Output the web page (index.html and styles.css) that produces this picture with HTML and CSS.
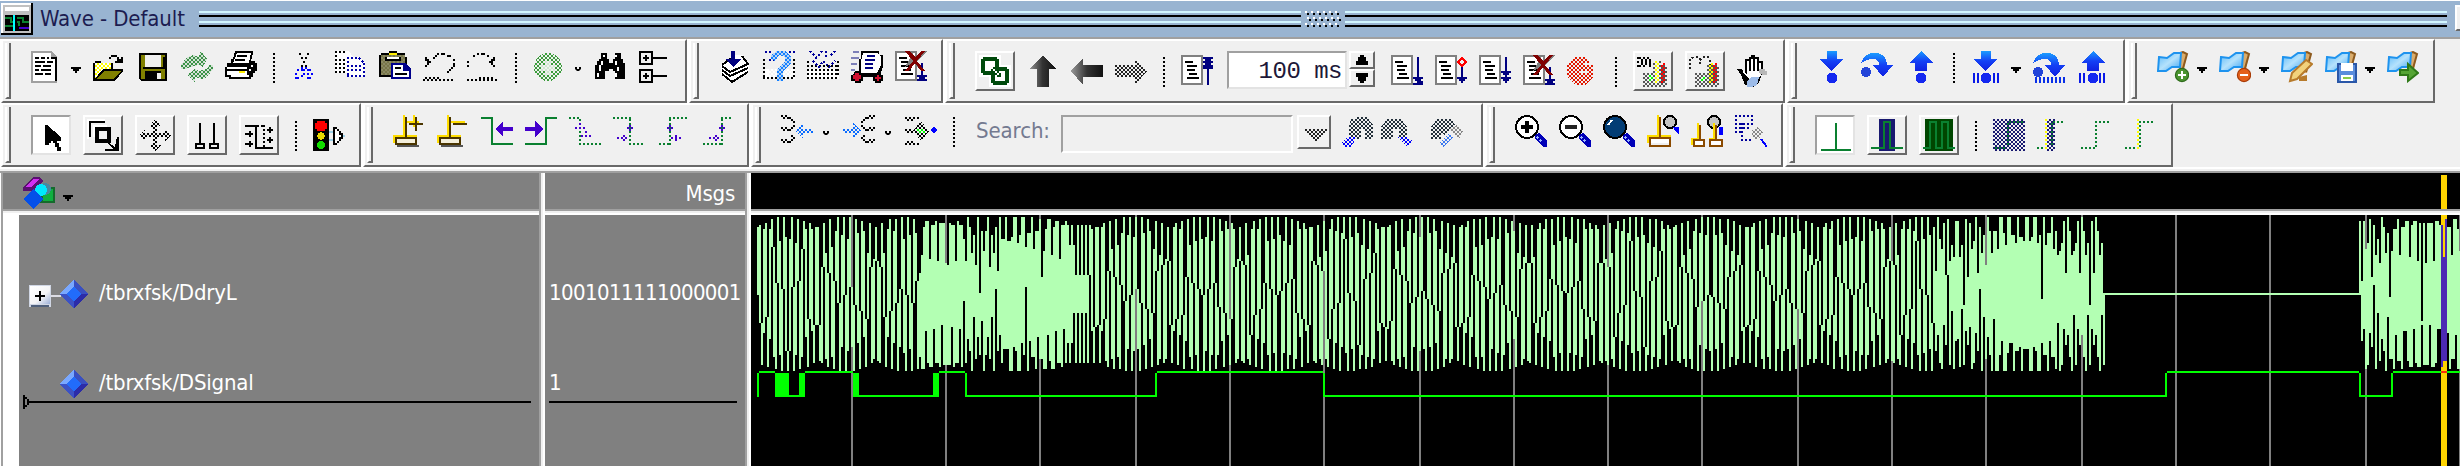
FILE: index.html
```html
<!DOCTYPE html>
<html lang="en">
<head>
<meta charset="utf-8">
<title>Wave - Default</title>
<link rel="stylesheet" href="styles.css">
</head>
<body>
<svg class="defs" aria-hidden="true">
  <defs>
    <pattern id="ck" width="2" height="2" patternUnits="userSpaceOnUse"><path d="M0 0h1v1H0zM1 1h1v1H1z" fill="#f0f0f0"/></pattern>
    <pattern id="ckb" width="2" height="2" patternUnits="userSpaceOnUse"><path d="M0 0h1v1H0zM1 1h1v1H1z" fill="#222"/></pattern>
    <pattern id="cky" width="2" height="2" patternUnits="userSpaceOnUse"><path d="M0 0h2v2H0z" fill="#fff"/><path d="M0 0h1v1H0zM1 1h1v1H1z" fill="#ff0"/></pattern>
    <pattern id="ckn" width="2" height="2" patternUnits="userSpaceOnUse"><path d="M0 0h1v1H0zM1 1h1v1H1z" fill="#191970"/></pattern>
    <linearGradient id="steel" x1="0" x2="1" y1="0" y2="0"><stop offset="0" stop-color="#999"/><stop offset=".5" stop-color="#333"/><stop offset="1" stop-color="#111"/></linearGradient>
    <linearGradient id="blue" x1="0" x2="0" y1="0" y2="1"><stop offset="0" stop-color="#1a9cff"/><stop offset=".5" stop-color="#1440f5"/><stop offset="1" stop-color="#1020e0"/></linearGradient>
    <linearGradient id="flagc" x1="0" x2="1" y1="0" y2="1"><stop offset="0" stop-color="#5ab8f8"/><stop offset=".5" stop-color="#b5e2fc"/><stop offset="1" stop-color="#3aa2f2"/></linearGradient>
    <linearGradient id="boxg" x1="0" x2="1" y1="0" y2="1"><stop offset="0" stop-color="#fff"/><stop offset=".6" stop-color="#f4f4f6"/><stop offset="1" stop-color="#9db0d8"/></linearGradient>
  </defs>
  <symbol id="doc" viewBox="0 0 16 16"><path d="M0 0h10l3 3v13H0z" fill="#a0a0a0"/><path d="M1 1h9v3h2v11H1z" fill="#fff"/><path d="M10 3h3v12h-1V4h-2zM2 3h2v1H2zM5 3h2v1H5zM8 3h1v1H8zM2 5h5v1H2zM8 5h3v1H8zM2 7h3v1H2zM6 7h4v1H6zM2 9h2v1H2zM5 9h5v1H5zM2 11h4v1H2zM7 11h3v1H7z"/></symbol>
  <symbol id="open" viewBox="0 0 16 16"><path d="M0 6h1V5h3v1h6v4H5L1 15H0z"/><path d="M1 6h8v3H5l-4 5z" fill="url(#cky)"/><path d="M5 9h10v1l-4 5H0z"/><path d="M5.500 10H14l-4 4H1.500z" fill="#808000"/><path d="M8 3h1v1H8zM9 2h3v1H9zM12 3h1v1h1V3h1v3h-4V5h1z"/></symbol>
  <symbol id="save" viewBox="0 0 16 16"><path d="M1 1h14v14H2l-1-1z"/><path d="M2 2h1v7h11V3h-1v5H3V2h11v12h-3v-4H4v4H2z" fill="#808000"/><path d="M4 2h8v6H4z" fill="#f0f0f0"/><path d="M4 10h8v4H4z"/><path d="M10 11h2v3h-2z" fill="#f0f0f0"/></symbol>
  <symbol id="reload" viewBox="0 0 16 16"><path d="M0 9V7l3-4 3-1 3 1 1-3 3 4-2 4-2-1-4 1-3 1zM16 7v2l-3 4-3 1-3-1v3l-4-4 4-3 2 1 4-1 1-2z" fill="#3b9247"/><path d="M0 0h16v16H0z" fill="url(#ck)" opacity=".85"/></symbol>
  <symbol id="print" viewBox="0 0 16 16"><path d="M5 0h9v1l-1 4h2v1h1v4h-1v1h-1v2h-1v1H2v-1H0V8h1V6h2V4h1z"/><path d="M6 1h7l-1 5H4z" fill="#fff"/><path d="M6 2h5v1H6zM5 4h5v1H5zM5 6h7v1H5z"/><path d="M1 8h10v1H1zM1 10h10v2H1zM3 12h9v1H3z" fill="#fff"/><path d="M7 10h3v1H7z" fill="#fe0"/><path d="M13 7h1v1h-1zM12 9h1v1h-1z" fill="#fff"/></symbol>
  <symbol id="cut" viewBox="0 0 16 16"><path d="M4 1h1v1H4zM8 1h1v1H8zM5 3h1v1H5zM7 3h1v1H7zM6 5h1v1H6zM5 7h1v1H5zM7 7h1v1H7z"/><path d="M5 8h1v1H5zM7 8h1v1H7zM3 9h1v1H3zM5 9h2v1H5zM8 9h2v1H8zM2 11h1v1H2zM6 11h1v1H6zM8 11h1v1H8zM10 11h1v1h-1zM2 13h2v1H2zM5 12h1v1H5zM8 13h2v1H8z" fill="#00f"/></symbol>
  <symbol id="copy" viewBox="0 0 16 16"><path d="M0 0h7l2 3v8H0z" fill="#fff"/><path d="M.500 0v11M0 .500h6M8.500 4v7M2 4.500h6M2 6.500h6M2 8.500h5M0 10.500h6" stroke="#000" fill="none" stroke-dasharray="1 1"/><path d="M6 3h6l3 3v7H6z" fill="#fff"/><path d="M6.500 3v10M6 3.500h6M14.500 6v8M8 7.500h6M8 9.500h6M6 12.500h9M12 3.500l3 3" stroke="#00a" fill="none" stroke-dasharray="1 1"/></symbol>
  <symbol id="paste" viewBox="0 0 16 16"><path d="M1 1h12v2h1v10H0V2h1z"/><path d="M1 2h12v10H1z" fill="#777548"/><path d="M1 2h12v10H1z" fill="url(#ck)" opacity=".16"/><path d="M3 3h8v2H3zM5 0h4v2H5z"/><path d="M4 3h6v1H4z" fill="#fff"/><path d="M5 1h4v1H5z" fill="#fe0"/><path d="M6 6h7l3 3v5H6z" fill="#00008b"/><path d="M7 7h5v3h3v3H7z" fill="#fff"/><path d="M8 8h3v1H8zM8 11h6v1H8z"/></symbol>
  <symbol id="undo" viewBox="0 0 16 16"><path d="M1 3h1v1h1v1h1v1H3v1H2v1H1V7h1V5H1zM7 1h1v1H7zM9 1h2v1H9zM12 2h2v1h-2zM5 3h1V2h1v1H6v1H5zM15 4h1v1h-1zM15 6h1v2h-1zM14 8h1v1h-1zM13 9h1v1h-1zM12 10h1v1h-1z"/><path d="M0 14.500h16M1 13.500h7" stroke="#000" stroke-dasharray="1 1"/></symbol>
  <symbol id="redo" viewBox="0 0 16 16"><path d="M14 3h-1v1h-1v1h-1v1h1v1h1v1h1V7h-1V5h1zM6 1H5v1h1zM9 1H7v1h2zM4 2H3v1h1zM10 2h1v1h-1zM1 5H0v1h1zM1 7H0v1h1z"/><path d="M0 14.500h15M6 13.500h7" stroke="#000" stroke-dasharray="1 1"/></symbol>
  <symbol id="plusball" viewBox="0 0 16 16"><circle cx="7.500" cy="8" r="7" fill="#3c9c3c"/><path d="M6 5h3v2h2v3H9v2H6v-2H4V7h2z" fill="#cfe6cf"/><path d="M0 0h16v16H0z" fill="url(#ck)"/></symbol>
  <symbol id="find" viewBox="0 0 16 16"><path d="M3 1h3v3h1v2h2V4h1V1h3v3h1v2h1v8h-5v-4H9v-1H7v1H5v4H0V7h1V5h1V4h1z"/><path d="M4 2h1v1H4zM10 2h1v1h-1zM3 5h1v2H3zM2 7h1v3H2zM1 11h1v2H1zM10 5h1v2h-1zM11 8h1v2h-1zM10 11h1v2h-1z" fill="#fff"/></symbol>
  <symbol id="tree" viewBox="0 0 16 16"><path d="M.500 .500h6v6h-6zM.500 9.500h6v6h-6zM7 3.500h7M7 12.500h7M2 3.500h3M3.500 2v3M2 12.500h3M3.500 11v3" fill="none" stroke="#000"/></symbol>
  <symbol id="compile" viewBox="0 0 16 16"><path d="M1 7l6-5h5l3 5v3l-9 6-5-4z" fill="#fff"/><path d="M1.500 7.500l4 3 9-4-3-4M1.500 7L7 3M1.500 9.500l4 3 9-4M1.500 11.500l5 4 8-5" fill="none" stroke="#000"/><path d="M6 0h2v4h3L7 8 3 4h3z" fill="#000080"/></symbol>
  <symbol id="docq" viewBox="0 0 16 16"><path d="M1 9h15v5H1z" fill="#fff"/><path d="M.500 4v10M15.500 4v10M0 13.500h16" fill="none" stroke="#000" stroke-dasharray="1 1"/><path d="M1 .500h4M13 .500h3M3 4.500h3" fill="none" stroke="#00009b" stroke-dasharray="1 1"/><path d="M4 4V2l3-2h4l3 3v3l-4 4v2H7V9l4-4V3L8 2 6 5z" fill="#1480ff"/><path d="M7 12h3v3H7z" fill="#1480ff"/><path d="M3 0h12v15H3z" fill="url(#ck)" opacity=".75"/></symbol>
  <symbol id="docall" viewBox="0 0 16 16"><path d="M0 9h16v5H0z" fill="#fff"/><path d="M0 7.500h16M0 9.500h16M0 11.500h16M0 13.500h16M.500 5v8M15.500 5v8" fill="none" stroke="#000" stroke-dasharray="1 1"/><path d="M1.500 0l3 3v2M7.500 0L5 3M9.500 0v3M14 0l-3 3M3 5l3 3 2-3 3 3 3-3" fill="none" stroke="#00009b" stroke-dasharray="1 1"/></symbol>
  <symbol id="cart" viewBox="0 0 16 16"><path d="M5 0h9v2h2v6l-2 5H4V4h1z"/><path d="M6 1h7l2 2v4l-2 4H5V5z" fill="#fff"/><path d="M1 .500h3M0 3.500h4M0 6.500h3M0 9.500h2" stroke="#7d80b8"/><path d="M8 2.500h4M7 4.500h5M7 6.500h4M7 8.500h4" stroke="#000080"/><path d="M2 10h3v1h1v4H5v1H2v-1H0v-3h1zM12 11h3v1h1v3h-1v1h-3v-1h-1v-3h1z"/><path d="M2 11h2v1h1v2H4v1H2v-1H1v-2h1zM13 12h1v1h1v1h-1v1h-1v-1h-1v-1h1z" fill="#d01030"/></symbol>
  <symbol id="rundoc" viewBox="0 0 16 16"><path d="M.500 .500h10v14H.500z" fill="#fff" stroke="#808080"/><path d="M2 3.500h4M3 5.500h5M3 7.500h4M4 9.500h4M3 11.500h6" stroke="#000"/></symbol>
  <symbol id="stopdoc" viewBox="0 0 16 16"><use href="#rundoc"/><path d="M11 12h2V6h1v6h2v1h-1v1h1v1h-5v-1h1v-1h-1z" fill="#000080"/><path d="M5 0l4 4 4-4h3l-5 5 4 5h-2l-4-4-4 2 4-7-4-5z" fill="#808080"/><path d="M5 0h2l3 3 3-3h2l-4 5 4 5h-2l-3-4-3 4H5l4-5z" fill="#800000"/></symbol>
  <symbol id="step" viewBox="0 0 16 16"><use href="#rundoc"/><path d="M13 1h1v10h2v1h-1v1h1v2h-5v-1h2v-1h-1v-1h-1v-1h2z" fill="#000080"/></symbol>
  <symbol id="contrun" viewBox="0 0 16 16"><use href="#rundoc"/><path d="M13 5h1v6h2v1h-1v1h-1v1h-1v-1h-1v-1h-1v-1h2z" fill="#000080"/><path d="M13.500 1.500l2 2-2 2-2-2z" fill="none" stroke="#f00"/></symbol>
  <symbol id="runall" viewBox="0 0 16 16"><use href="#rundoc"/><path d="M13 1h1v7h2v1h-1v1h-1v1h2v1h-1v1h-1v1h-1v-1h-1v-1h-1v-1h2v-1h-1V9h-1V8h2z" fill="#000080"/></symbol>
  <symbol id="restart" viewBox="0 0 16 16"><use href="#rundoc"/><path d="M11 1h5v1h-1v1h1v1h-1v1h1v2h-2v8h-1V7h-2V5h1V4h-1V3h1V2h-1z" fill="#000080"/></symbol>
  <symbol id="break" viewBox="0 0 16 16"><path d="M4 1h5l4 4v6l-4 4H4l-4-4V5z" fill="#e21800"/><path d="M8 4h5v1H8zM7 8h4v1H7z" fill="#f0f0f0"/><path d="M0 0h16v16H0z" fill="url(#ck)"/></symbol>
  <symbol id="chain" viewBox="0 0 16 16"><path d="M0 0h11v5h5v11H5v-5H0z" fill="#fff"/><path d="M1 2h1V1h7v1h1v7H9v1H2V9H1zM3 3v5h5V3z" fill="#004a0c" fill-rule="evenodd"/><path d="M6 6h10v10H5V9h1z" fill="#fff"/><path d="M6 7h1V6h7v1h1v7h-1v1H7v-1H6zM8 8v5h5V8z" fill="#004a0c" fill-rule="evenodd"/><path d="M8 5h2v4H8zM5 8h2v2H5z" fill="#004a0c"/><path d="M6 6h1v1H6zM7 7h1v1H7zM8 8h1v1H8z" fill="#fff"/><path d="M7 6h1v1h1v1h1v1h1v2H9v-1H8V9H7V8H6V7h1z" fill="#004a0c"/><path d="M7 7h1v1H7zM8 8h1v1H8zM9 9h1v1H9z" fill="#fff"/></symbol>
  <symbol id="up" viewBox="0 0 16 16"><path d="M8 0l6.500 7H11v9H5V7H1z" fill="url(#steel)"/></symbol>
  <symbol id="left" viewBox="0 0 16 16"><path d="M0 8l6-6.500V5h10v6H6v4z" fill="url(#steel)"/></symbol>
  <symbol id="right" viewBox="0 0 16 16"><path d="M16 8l-6-6.500V5H0v6h10v4z" fill="#222"/><path d="M0 0h16v16H0z" fill="url(#ck)"/></symbol>
  <symbol id="perf" viewBox="0 0 16 16"><path d="M3 9h5V3h4v2h3v11H3z" fill="url(#ckb)" opacity=".75"/><path d="M1 1.500h5M0 3.500h7M1 5.500h3M6 5.500h1" stroke="#000" stroke-dasharray="1 1" fill="none"/><path d="M.500 1v5M2.500 2v3M4.500 2v3M6.500 2v3" stroke="#000" stroke-dasharray="1 1"/><path d="M6 10h1v1H6zM7 11h1v1H7zM6 12h1v1H6z" fill="#0f0"/><path d="M9.500 3v11M10.500 4v9" stroke="#ff0" stroke-dasharray="1 1"/><path d="M12.500 5v9M13.500 4v9" stroke="#f00" stroke-dasharray="1 1"/></symbol>
  <symbol id="mem" viewBox="0 0 16 16"><path d="M3 9h6V5h6v11H3z" fill="url(#ckb)" opacity=".75"/><path d="M.500 7V2l2-1h2l1 1v3M5.500 2.500l2-1.500h2l1 2v3" fill="none" stroke="#222" stroke-dasharray="1 1"/><path d="M7 11h1v1H7zM6 12h1v1H6z" fill="#0f0"/><path d="M10.500 5v9M11.500 4v9" stroke="#ff0" stroke-dasharray="1 1"/><path d="M12.500 5v9M13.500 4v9" stroke="#f00" stroke-dasharray="1 1"/></symbol>
  <symbol id="hand" viewBox="0 0 16 16"><path d="M4 15l-2-5-2-3h2l2 2V2h2V1h1V0h2v1h2v2h2v5l-2 6-3 2z"/><path d="M5 3h1v5h1V2h1v6h1V2h1v6h1V4h1v6l-2 2H6L3 9V8l2 2z" fill="#fff"/><path d="M5 13l2-2h4l-1 4-3 1H5z" fill="#9cbbe8"/><path d="M11 7h3v1h1v2h-2l-2-1z" fill="#b8b8b8"/></symbol>
  <symbol id="into" viewBox="0 0 16 16"><path d="M5 0h5v4h3L7.500 10 1 4h4z" fill="url(#blue)"/><circle cx="7.500" cy="13.500" r="2.700" fill="#1428f0"/></symbol>
  <symbol id="over" viewBox="0 0 16 16"><path d="M0 6C1 2 4 1 7 1c4 0 6 2 6 6h3l-5 6-5-6h3c0-2-1-3-3-3-3 0-4 1-6 2z" fill="url(#blue)"/><circle cx="2.500" cy="10.500" r="2.500" fill="#2244d8"/></symbol>
  <symbol id="out" viewBox="0 0 16 16"><path d="M8 0l6 6h-3v4H5V6H2z" fill="url(#blue)"/><circle cx="8" cy="13.500" r="2.700" fill="#1428f0"/></symbol>
  <symbol id="bars" viewBox="0 0 16 16"><path d="M1.500 11v5M3.500 11v5M11.500 11v5M13.500 11v5" stroke="#0a1ae8"/></symbol>
  <symbol id="flag" viewBox="0 0 16 16"><path d="M12 1h2l1 1-2 9h-2z" fill="#d9ac6c"/><path d="M10 1.500l3-1 2 1-2.500 9" fill="none" stroke="#8d5a1e"/><path d="M1 3l4 .500L8.500 1H12l-.500 7-4 0-3 2H.500z" fill="url(#flagc)" stroke="#1e93ee"/></symbol>
  <symbol id="f-add" viewBox="0 0 16 16"><use href="#flag"/><circle cx="12.500" cy="12" r="3.300" fill="#4a9430" stroke="#2f6b1c" stroke-width=".6"/><path d="M12 10h1v1.500h1.500v1H13V14h-1v-1.500h-1.500v-1H12z" fill="#fff"/></symbol>
  <symbol id="f-del" viewBox="0 0 16 16"><use href="#flag"/><circle cx="12.500" cy="12" r="3.300" fill="#e4601a" stroke="#a83c08" stroke-width=".6"/><path d="M10.500 11.500h4v1h-4z" fill="#fff"/></symbol>
  <symbol id="f-edit" viewBox="0 0 16 16"><use href="#flag"/><path d="M4.500 15l1-4 7-6.500 3 2L8 14z" fill="#f2d27c" stroke="#b77b2c"/><path d="M9 13l4-1v3H9z" fill="#b77b2c"/></symbol>
  <symbol id="f-save" viewBox="0 0 16 16"><use href="#flag"/><path d="M6.500 6.500h9v9h-9z" fill="#5a8ddc" stroke="#2a57a8"/><path d="M8 6h6v4H8zM8 12h6v3H8z" fill="#fff"/><path d="M9 13h4v1H9z" fill="#8acb4a"/></symbol>
  <symbol id="f-go" viewBox="0 0 16 16"><use href="#flag"/><path d="M6.500 9.500h4v-3l5 4.500-5 4v-3h-4z" fill="#55a534" stroke="#2f7a18"/></symbol>

  <symbol id="arrow" viewBox="0 0 16 16"><path d="M5 3h1l7 6v2h-2v1h1v2h1v2h-2v-2h-1v-2H9v-1H8v1H7v1H5z"/></symbol>
  <symbol id="zoomsel" viewBox="0 0 16 16"><path d="M9 .500H.500V10M3.500 9V3.500H10" fill="none" stroke="#fff"/><path d="M1.500 9V1.500H9" fill="none" stroke="#000"/><path d="M5 5h6v6H5z" fill="none" stroke="#000" stroke-width="2"/><path d="M15 9h1v7H9v-1h4l-3-3h1l3 2z"/></symbol>
  <symbol id="pan" viewBox="0 0 16 16"><path d="M8 0l3 3-2 1v3h4V5l3 3-3 3V9H9v4h2l-3 3-3-3h2V9H3v2L0 8l3-3v2h4V4H5z"/><path d="M0 0h16v16H0z" fill="url(#ck)"/></symbol>
  <symbol id="curs2" viewBox="0 0 16 16"><path d="M4.500 2v10M11.500 2v10M2.500 12.500h4v2h-4zM9.500 12.500h4v2h-4z" fill="none" stroke="#000"/></symbol>
  <symbol id="edgeed" viewBox="0 0 16 16"><path d="M1 3.500h5.500v11H15M1 7.500h4M3.500 6v3M1 12.500h4M3.500 11v3M12 5.500h3M13.500 4v3M12 10.500h3M13.500 9v3" fill="none" stroke="#000"/><path d="M7 3.500h4M10.500 3v11" stroke="#000" stroke-dasharray="1 1" fill="none"/></symbol>
  <symbol id="traffic" viewBox="0 0 16 16"><path d="M0 0h8v16H0z"/><path d="M2 1h4v1h1v3H6v1H2V5H1V2h1z" fill="#f00"/><circle cx="4" cy="8.500" r="1.800" fill="#e8d800"/><circle cx="4" cy="13" r="2" fill="#1d0"/><path d="M8 6.500h3M8 10.500h3M14 8.500h2" stroke="#9bd0e8"/><path d="M10 4h2v1h1v1h1v1h1v3h-1v1h-1v1h-1v1h-2z"/><path d="M11 5h1v1h1v2h1v1h-1v2h-1v1h-1z" fill="#fff"/></symbol>
  <symbol id="cbase" viewBox="0 0 16 16"><path d="M2 15h11v1H2z" fill="#555"/><path d="M5 0h1v10h6v1H1v3H0v-4h5z" fill="#fd0"/><path d="M6.500 1v10M1.500 11.500h10v3h-10z" fill="none" stroke="#4a3500"/><path d="M2 12h9v2H2z" fill="#f4efdc"/></symbol>
  <symbol id="c-add" viewBox="0 0 16 16"><use href="#cbase"/><path d="M7 3.500h6M10.500 0v6" stroke="#fd0"/><path d="M8 4.500h7M11.500 1v7" stroke="#4a3500"/></symbol>
  <symbol id="c-del" viewBox="0 0 16 16"><use href="#cbase"/><path d="M7 3.500h7" stroke="#fd0"/><path d="M8 4.500h7" stroke="#4a3500"/></symbol>
  <symbol id="prev" viewBox="0 0 16 16"><path d="M0 1.500h5.500v13H16" fill="none" stroke="#0a8030"/><path d="M7 7l4-4v3h5v2h-5v3z" fill="#4400cc"/></symbol>
  <symbol id="next" viewBox="0 0 16 16"><path d="M0 14.500h10.500v-13H16" fill="none" stroke="#0a8030"/><path d="M9 7L5 3v3H0v2h5v3z" fill="#4400cc"/></symbol>
  <symbol id="e1" viewBox="0 0 16 16"><path d="M0 1.500h6M5.500 2v13M5 14.500h11" fill="none" stroke="#0a8030" stroke-dasharray="1 1"/><path d="M3 6.500h5M5.500 4v4M6 10.500h6M8.500 8v4" stroke="#4400cc" stroke-dasharray="1 1"/></symbol>
  <symbol id="e2" viewBox="0 0 16 16"><path d="M0 1.500h9M8.500 2v13M8 14.500h8" fill="none" stroke="#0a8030" stroke-dasharray="1 1"/><path d="M7 6.500h4M8.500 5v3M2 11.500h6M5.500 10v3" stroke="#4400cc" stroke-dasharray="1 1"/></symbol>
  <symbol id="e3" viewBox="0 0 16 16"><path d="M6 1.500h9M6.500 2v13M1 14.500h5" fill="none" stroke="#0a8030" stroke-dasharray="1 1"/><path d="M5 6.500h4M6.500 5v3M7 11.500h6M9.500 10v3" stroke="#4400cc" stroke-dasharray="1 1"/></symbol>
  <symbol id="e4" viewBox="0 0 16 16"><path d="M10 1.500h5M10.500 2v13M1 14.500h9" fill="none" stroke="#0a8030" stroke-dasharray="1 1"/><path d="M9 6.500h4M10.500 5v3M4 11.500h6M7.500 10v3" stroke="#4400cc" stroke-dasharray="1 1"/></symbol>
  <symbol id="fanin" viewBox="0 0 16 16"><path d="M0 .500h1M2 .500h1M1 1.500h1M3 1.500h2M5 2.500h1M6 3.500h1M6 5.500h1M5 6.500h1M0 6.500h1M2 6.500h1M1 7.500h1M3 7.500h2M5 10.500h1M6 11.500h1M5 12.500h1M0 12.500h1M2 12.500h1M1 13.500h1M3 13.500h2" stroke="#000"/><path d="M7 8l4-4v3h5v2h-5v3z" fill="#0a6cff"/><path d="M7 0h9v16H7z" fill="url(#ck)"/></symbol>
  <symbol id="fanout" viewBox="0 0 16 16"><path d="M16 .500h-1M14 .500h-1M15 1.500h-1M13 1.500h-2M11 2.500h-1M10 3.500h-1M10 5.500h-1M11 6.500h-1M16 6.500h-1M14 6.500h-1M15 7.500h-1M13 7.500h-2M11 10.500h-1M10 11.500h-1M11 12.500h-1M16 12.500h-1M14 12.500h-1M15 13.500h-1M13 13.500h-2" stroke="#000"/><path d="M9 8L5 4v3H0v2h5v3z" fill="#0a6cff"/><path d="M0 0h9v16H0z" fill="url(#ck)"/></symbol>
  <symbol id="fanx" viewBox="0 0 16 16"><path d="M0 1.500h8M1 2.500h3M0 7.500h4M1 8.500h3M0 14.500h8M1 13.500h3" fill="none" stroke="#000" stroke-dasharray="1 1"/><path d="M8 3l4 5-4 5-4-5z"/><path d="M6 7h4v2H6z" fill="#0f0"/><path d="M4 2h8v12H4z" fill="url(#ck)"/><path d="M14.500 6.500l1 1-1 1-1-1z" fill="none" stroke="#00f"/></symbol>
  <symbol id="sprev" viewBox="0 0 16 16"><path d="M5 2h2V1h6l3 4v7h-4V7h-2v5H7l-3-1V5z" fill="#222f3a"/><path d="M0 14l3-3h5l-3 5H2z" fill="#00f"/><path d="M0 0h16v16H0z" fill="url(#ck)"/></symbol>
  <symbol id="snext" viewBox="0 0 16 16"><path d="M0 6l3-4h7l3 4v6H9V7H6v5H0z" fill="#222f3a"/><path d="M8 11h5l3 2-3 3z" fill="#00f"/><path d="M0 0h16v16H0z" fill="url(#ck)"/></symbol>
  <symbol id="sopt" viewBox="0 0 16 16"><path d="M0 6l3-4h7l2 3-5 5-2-1v3H0z" fill="#222f3a"/><path d="M9 7l4-2 3 3-2 4z" fill="#888"/><path d="M4 14l5-5 2 2-5 5z" fill="#3a78f0"/><path d="M0 0h16v16H0z" fill="url(#ck)"/></symbol>
  <symbol id="lens" viewBox="0 0 16 16"><path d="M10 10l2-1 4 4v3h-2l-4-4z" fill="#0000b8"/><path d="M11 11l3 3" stroke="#9db8ff" stroke-dasharray="1 1"/></symbol>
  <symbol id="zin" viewBox="0 0 16 16"><use href="#lens"/><circle cx="6" cy="6" r="5.500" fill="#fff" stroke="#000"/><path d="M5 3h2v2h2v2H7v2H5V7H3V5h2z"/></symbol>
  <symbol id="zout" viewBox="0 0 16 16"><use href="#lens"/><circle cx="6" cy="6" r="5.500" fill="#fff" stroke="#000"/><path d="M3 5h6v2H3z" fill="#222"/></symbol>
  <symbol id="zfull" viewBox="0 0 16 16"><use href="#lens"/><circle cx="6" cy="6" r="5.500" fill="#023d75" stroke="#000"/><path d="M2.500 5l2-2.500" stroke="#fff"/></symbol>
  <symbol id="zcur" viewBox="0 0 16 16"><path d="M5 0h1v10h6v1H1v3H0v-4h5z" fill="#fd0"/><path d="M6.500 1v10M1.500 11.500h10v4h-10z" fill="none" stroke="#8a4a00"/><path d="M2 12h9v2H2z" fill="#fff"/><circle cx="11.500" cy="3.500" r="3" fill="#c4c4c4" stroke="#000"/><path d="M13 6h3v4l-2-2z" fill="#00f"/></symbol>
  <symbol id="zcur2" viewBox="0 0 16 16"><circle cx="11.500" cy="3.500" r="3" fill="#c4c4c4" stroke="#000"/><path d="M14 6h2v4h-2z" fill="#00f"/><path d="M3.500 4v8H.500v3M11.500 4v8H9" fill="none" stroke="#fd0"/><path d="M4.500 5v7M12.500 5v7M1.500 12.500h5v3h-5zM9.500 12.500h6v3h-6z" fill="none" stroke="#8a4a00"/><path d="M2 13h4v2H2zM10 13h5v2h-5z" fill="#fff"/></symbol>
  <symbol id="zother" viewBox="0 0 16 16"><path d="M0 .500h8M.500 0v9M2 4.500h8M2 6.500h5M3.500 4v9M8.500 0v5M0 8.500h4M3 12.500h6" fill="none" stroke="#00009b" stroke-dasharray="1 1"/><path d="M8 8l3-2 3 3-2 3H9z" fill="#888"/><path d="M7 5h8v8H7z" fill="url(#ck)"/><path d="M13 12l3 4" stroke="#00f"/></symbol>
  <symbol id="w1" viewBox="0 0 16 16"><path d="M8.500 2v13M1 15.500h15" stroke="#0a8030"/></symbol>
  <symbol id="w2" viewBox="0 0 16 16"><path d="M4 0h8v16H4z" fill="#191970"/><path d="M0 14.500h6.500v-13h3v13H16" fill="none" stroke="#0a8030"/></symbol>
  <symbol id="w3" viewBox="0 0 16 16"><path d="M1 0h14v16H1z" fill="#004600"/><path d="M0 14.500h3.500v-13h3v13h3v-13h3v13H16" fill="none" stroke="#0a8030"/></symbol>
  <symbol id="w4" viewBox="0 0 16 16"><path d="M0 0h16v16H0z" fill="url(#ckn)"/><path d="M1 14.500h6M7.500 2v12M8 1.500h7" stroke="#0a8030" stroke-dasharray="1 1"/></symbol>
  <symbol id="w5" viewBox="0 0 16 16"><path d="M5 0h4v16H5z" fill="url(#ckn)"/><path d="M4.500 0v16" stroke="#ff0" stroke-dasharray="1 1"/><path d="M0 14.500h4M7.500 2v12M8 1.500h6" stroke="#0a8030" stroke-dasharray="1 1"/></symbol>
  <symbol id="w6" viewBox="0 0 16 16"><path d="M0 14.500h7M7.500 1v13M9 1.500h6" stroke="#0a8030" stroke-dasharray="1 1"/></symbol>
  <symbol id="w7" viewBox="0 0 16 16"><path d="M6.500 0v15" stroke="#ff0" stroke-dasharray="1 1"/><path d="M0 14.500h6M7.500 1v13M9 1.500h6" stroke="#0a8030" stroke-dasharray="1 1"/></symbol>
  <symbol id="gem" viewBox="0 0 16 16"><path d="M8 0L0 8h8z" fill="#7aa8ff"/><path d="M8 0l7.500 8H8z" fill="#3a50c0"/><path d="M0 8h8v8z" fill="#3c52c4"/><path d="M15.500 8H8v8z" fill="#2c2ca8"/><path d="M8 4l4 4-4 4-4-4z" fill="#226cfb"/></symbol>
</svg>

<header class="titlebar">
  <svg class="app-icon" viewBox="0 0 16 16"><path d="M0 0h16v16H0z"/><path d="M0 0h15v15H0z" fill="#fff"/><path d="M1 1h14v14H1z" fill="#c0c0c0"/><path d="M2 2h12v2H2z" fill="#fff"/><path d="M2 6h12v8H2z"/><path d="M2 7.500h3v2h2M8 7.500h3v2h3M2 11.500h4M8 9.500h1v2" fill="none" stroke="#0a8030"/><path d="M6.500 6v8" stroke="#0ff"/><path d="M9 12.500h5" stroke="#40c"/></svg>
  <h1 class="title">Wave - Default</h1>
  <div class="rails first"></div>
  <svg class="nub" viewBox="0 0 22 8"><path d="M2 .500h18M3 3.500h16M2 6.500h18" stroke="#fff" stroke-dasharray="1 2"/><path d="M3 1.500h17M4 4.500h17M3 7.500h17" stroke="#000" stroke-dasharray="1 2"/></svg>
  <div class="rails last"></div>
  <div class="dock-btn"><svg viewBox="0 0 11 11"><path d="M1 5h9v1H1zM5 1h1v9H5z"/></svg></div>
</header>

<div class="bars">
  <div class="row">
    <div class="bar bar-std"><i class="grip"></i>
      <svg class="ic"><use href="#doc"/></svg><i class="dd"></i><svg class="ic"><use href="#open"/></svg><svg class="ic"><use href="#save"/></svg><svg class="ic"><use href="#reload"/></svg><svg class="ic"><use href="#print"/></svg><i class="sep"></i><svg class="ic"><use href="#cut"/></svg><svg class="ic"><use href="#copy"/></svg><svg class="ic"><use href="#paste"/></svg><svg class="ic"><use href="#undo"/></svg><svg class="ic"><use href="#redo"/></svg><i class="sep"></i><svg class="ic"><use href="#plusball"/></svg><i class="dd dim"></i><svg class="ic"><use href="#find"/></svg><svg class="ic"><use href="#tree"/></svg>
    </div>
    <div class="bar bar-compile"><i class="grip"></i>
      <svg class="ic"><use href="#compile"/></svg><svg class="ic"><use href="#docq"/></svg><svg class="ic"><use href="#docall"/></svg><svg class="ic"><use href="#cart"/></svg><svg class="ic"><use href="#stopdoc"/></svg>
    </div>
    <div class="bar bar-sim"><i class="grip"></i>
      <span class="btn"><svg><use href="#chain"/></svg></span><svg class="ic"><use href="#up"/></svg><svg class="ic"><use href="#left"/></svg><svg class="ic"><use href="#right"/></svg><i class="sep"></i><svg class="ic"><use href="#restart"/></svg>
      <span class="time">100 ms</span><span class="spin"><svg viewBox="0 0 6 5"><path d="M2 0h2v1h1v2h1v2H0V3h1V1h1z"/></svg><svg viewBox="0 0 6 5"><path d="M2 5h2V4h1V2h1V0H0v2h1v2h1z"/></svg></span>
      <svg class="ic"><use href="#step"/></svg><svg class="ic"><use href="#contrun"/></svg><svg class="ic"><use href="#runall"/></svg><svg class="ic"><use href="#stopdoc"/></svg><svg class="ic"><use href="#break"/></svg><i class="sep"></i><span class="btn"><svg><use href="#perf"/></svg></span><span class="btn"><svg><use href="#mem"/></svg></span><svg class="ic"><use href="#hand"/></svg>
    </div>
    <div class="bar bar-step"><i class="grip"></i>
      <svg class="ic"><use href="#into"/></svg><svg class="ic"><use href="#over"/></svg><svg class="ic"><use href="#out"/></svg><i class="sep"></i><svg class="ic"><use href="#bars"/><use href="#into"/></svg><i class="dd"></i><svg class="ic" viewBox="0 0 16 16"><use href="#over"/><path d="M1 14.500h15" stroke="#0a30e8" stroke-width="3" stroke-dasharray="1 1"/></svg><svg class="ic"><use href="#bars"/><use href="#out"/></svg>
    </div>
    <div class="bar bar-flag"><i class="grip"></i>
      <svg class="ic soft"><use href="#f-add"/></svg><i class="dd"></i><svg class="ic soft"><use href="#f-del"/></svg><i class="dd"></i><svg class="ic soft"><use href="#f-edit"/></svg><svg class="ic soft"><use href="#f-save"/></svg><i class="dd"></i><svg class="ic soft"><use href="#f-go"/></svg>
    </div>
  </div>
  <div class="row">
    <div class="bar bar-mode"><i class="grip"></i>
      <span class="btn on"><svg><use href="#arrow"/></svg></span><span class="btn"><svg><use href="#zoomsel"/></svg></span><span class="btn"><svg><use href="#pan"/></svg></span><span class="btn"><svg><use href="#curs2"/></svg></span><span class="btn"><svg><use href="#edgeed"/></svg></span><i class="sep"></i><svg class="ic"><use href="#traffic"/></svg>
    </div>
    <div class="bar bar-cursor"><i class="grip"></i>
      <svg class="ic"><use href="#c-add"/></svg><svg class="ic"><use href="#c-del"/></svg><svg class="ic"><use href="#prev"/></svg><svg class="ic"><use href="#next"/></svg><svg class="ic"><use href="#e1"/></svg><svg class="ic"><use href="#e2"/></svg><svg class="ic"><use href="#e3"/></svg><svg class="ic"><use href="#e4"/></svg>
    </div>
    <div class="bar bar-search"><i class="grip"></i>
      <svg class="ic"><use href="#fanin"/></svg><i class="dd dim"></i><svg class="ic"><use href="#fanout"/></svg><i class="dd dim"></i><svg class="ic"><use href="#fanx"/></svg><i class="sep"></i>
      <span class="label">Search:</span><span class="field"></span><span class="combo"><svg viewBox="0 0 11 6"><path d="M0 0h11v1h-1v1H9v1H8v1H7v1H6v1H5V5H4V4H3V3H2V2H1V1H0z" fill="url(#ckb)"/></svg></span><svg class="ic s1"><use href="#sprev"/></svg><svg class="ic s2"><use href="#snext"/></svg><svg class="ic s3"><use href="#sopt"/></svg>
    </div>
    <div class="bar bar-zoom"><i class="grip"></i>
      <svg class="ic"><use href="#zin"/></svg><svg class="ic"><use href="#zout"/></svg><svg class="ic"><use href="#zfull"/></svg><svg class="ic"><use href="#zcur"/></svg><svg class="ic"><use href="#zcur2"/></svg><svg class="ic"><use href="#zother"/></svg>
    </div>
    <div class="bar bar-wave"><i class="grip"></i>
      <span class="btn on"><svg><use href="#w1"/></svg></span><span class="btn"><svg><use href="#w2"/></svg></span><span class="btn"><svg><use href="#w3"/></svg></span><i class="sep"></i><svg class="ic"><use href="#w4"/></svg><svg class="ic"><use href="#w5"/></svg><svg class="ic"><use href="#w6"/></svg><svg class="ic"><use href="#w7"/></svg>
    </div>
  </div>
</div>

<main class="wave">
  <section class="pane names">
    <div class="head"><svg class="shapes" viewBox="0 0 16 16"><path d="M8 5h8v8H8z" fill="#156b2c"/><path d="M10 6h5v6h-5z" fill="#10b040"/><path d="M0 5l5-5h3l2 2-5 5H0z" fill="#5a1070"/><path d="M1 5l4-4h3l-4 4z" fill="#d030f0"/><circle cx="11" cy="6" r="3" fill="#4888a0"/><circle cx="9" cy="6.500" r="3" fill="#00e8ff"/><path d="M5 6l5 5-5 5-5-5z" fill="#0450e8"/></svg><i class="dd"></i></div>
    <div class="rule"></div>
    <div class="body tree">
      <div class="sig first"><svg class="plus" viewBox="0 0 11 11"><path d="M0 0h11v11H0z" fill="#d0d6e4"/><path d="M.500 .500h10v9H.500z" fill="url(#boxg)"/><path d="M1 10h9v1H1z" fill="#50607c"/><path d="M3 5h5v1H3zM5 3h1v5H5z"/></svg><i class="twig"></i><svg class="gem"><use href="#gem"/></svg><span>/tbrxfsk/DdryL</span></div>
      <div class="sig second"><svg class="gem"><use href="#gem"/></svg><span>/tbrxfsk/DSignal</span></div>
      <svg class="insert" viewBox="0 0 254 7"><path d="M0 0h1v1h1v1h1v1h251v1H3v1H2v1H1v1H0z"/><path d="M1 2h1v3H1z" fill="#808080"/></svg>
    </div>
  </section>
  <i class="split"></i>
  <section class="pane values">
    <div class="head"><span>Msgs</span></div>
    <div class="rule"></div>
    <div class="body">
      <div class="val first">1001011111000001</div>
      <div class="val second">1</div>
      <i class="line"></i>
    </div>
  </section>
  <i class="split"></i>
  <section class="pane plot">
    <div class="head"><i class="mark"></i></div>
    <div class="rule"></div>
    <svg class="body canvas" viewBox="751 215 1709 251" preserveAspectRatio="none">
      <path id="grid" stroke="#808080" stroke-width="2"/>
      <path d="M2441 215h6v251h-6z" fill="#ffd400"/>
      <path id="bus" fill="#b3ffb3"/>
      <path id="busCursor" fill="#4c2ab3"/>
      <path d="M2103 293h256v2h-256z" fill="#b3ffb3"/>
      <path fill="#0f0" d="M757 373h2v24h-2zM759 371h16v2h-16zM775 373h14v24h-14zM789 395h10v2h-10zM799 373h6v24h-6zM805 371h48v2h-48zM853 373h6v24h-6zM859 395h74v2h-74zM933 373h6v24h-6zM939 371h26v2h-26zM965 373h2v24h-2zM967 395h188v2H967zM1155 373h2v24h-2zM1157 371h166v2h-166zM1323 373h2v24h-2zM1325 395h840v2h-840zM2165 373h2v24h-2zM2167 371h192v2h-192zM2359 373h2v24h-2zM2361 395h30v2h-30zM2391 373h2v24h-2zM2393 371h67v2h-67z"/>
      <path d="M2441 371h6v2h-6z" fill="#ff2a10"/>
    </svg>
  </section>
</main>
<script src="wave.js"></script>
</body>
</html>
```
FILE: styles.css
```css
* { box-sizing: border-box; }
body {
  margin: 0;
  width: 2460px;
  height: 466px;
  overflow: hidden;
  display: flex;
  flex-direction: column;
  background: #f0f0f0;
  font: 22px/28px "DejaVu Sans Condensed", "DejaVu Sans", sans-serif;
}
svg { display: block; shape-rendering: crispEdges; flex: none; }
.defs { width: 0; height: 0; flex: none; position: absolute; }
i { display: block; flex: none; }

.titlebar {
  height: 39px;
  flex: none;
  display: flex;
  align-items: flex-start;
  padding-left: 1px;
  background: #99b4d1;
  border-top: 1px solid #fff;
  border-bottom: 2px solid #a0a0a0;
}
.app-icon { width: 32px; height: 32px; margin-top: 2px; }
.title {
  margin: 4px 0 0 7px;
  width: 159px;
  flex: none;
  font-size: 22px;
  font-weight: 400;
  letter-spacing: -.1px;
  line-height: 28px;
  color: #1c1c50;
  white-space: nowrap;
}
.rails {
  width: 1102px;
  height: 16px;
  margin-top: 10px;
  flex: none;
  background: linear-gradient(#d2f6ff 2px, transparent 2px 4px, #000 4px 6px, transparent 6px 10px, #d2f6ff 10px 12px, transparent 12px 14px, #000 14px);
}
.nub { width: 44px; height: 16px; margin-top: 10px; }
.dock-btn {
  width: 26px;
  height: 26px;
  margin: 4px 0 0 8px;
  padding: 0 0 0 1px;
  border: 2px solid #fff;
  border-bottom-color: #696969;
  background: #f0f0f0;
  flex: none;
}
.dock-btn svg { width: 22px; height: 22px; }

.bars { padding-left: 1px; background: #f0f0f0; height: 128px; flex: none; box-shadow: inset 1px 0 #fff; }
.row { display: flex; gap: 2px; height: 64px; }
.bar {
  height: 64px;
  flex: none;
  display: flex;
  align-items: flex-start;
  padding: 10px 0 0 2px;
  border: 2px solid #696969;
  border-top-color: #fff;
  border-left-color: #fff;
  box-shadow: -2px 0 #fff;
}
.bar > * { margin-left: 6px; margin-right: 6px; }
.bar > .grip {
  width: 6px;
  height: 56px;
  margin: -8px 14px 0 0;
  border-left: 2px solid #fff;
  border-right: 2px solid #696969;
  border-bottom: 2px solid #696969;
}
.ic { width: 32px; height: 32px; }
.ic.soft { shape-rendering: auto; }
.bar > .sep, .bar > .dd { margin: 0; }
.sep {
  width: 22px;
  height: 32px;
  background: repeating-linear-gradient(#000 0 2px, transparent 2px 4px) 10px 2px / 2px 30px no-repeat;
}
.dd {
  width: 18px;
  height: 32px;
  background: #000;
  clip-path: polygon(2px 16px, 12px 16px, 12px 18px, 10px 18px, 10px 20px, 8px 20px, 8px 22px, 6px 22px, 6px 20px, 4px 20px, 4px 18px, 2px 18px);
}
.dd.dim { clip-path: polygon(4px 16px, 6px 16px, 6px 18px, 8px 18px, 8px 16px, 10px 16px, 10px 18px, 8px 20px, 6px 20px, 4px 18px); }
.btn {
  width: 40px;
  height: 40px;
  flex: none;
  padding: 2px;
  border: 2px solid #fff;
  border-right-color: #696969;
  border-bottom-color: #696969;
}
.btn svg { width: 32px; height: 32px; }
.btn.on { background: #fff; border-color: #a0a0a0 #e3e3e3 #e3e3e3 #a0a0a0; }
.bar-sim > .ic, .bar-sim > .sep, .bar-mode > .ic, .bar-mode > .sep, .bar-wave > .ic, .bar-wave > .sep { margin-top: 4px; }

.bar-std { width: 686px; }
.bar-compile { width: 254px; }
.bar-sim { width: 840px; }
.bar-step { width: 338px; }
.bar-flag { width: 308px; }
.bar-mode { width: 360px; }
.bar-cursor { width: 386px; }
.bar-search { width: 732px; }
.bar-zoom { width: 298px; }
.bar-wave { width: 388px; }

.bar > .time {
  width: 120px;
  height: 38px;
  margin: 0 0 0 8px;
  padding: 5px 3px 0 0;
  border: 2px solid #a0a0a0;
  border-right-color: #e3e3e3;
  border-bottom-color: #e3e3e3;
  background: #fff;
  font: 24px/28px "Liberation Mono", monospace;
  letter-spacing: -.5px;
  text-align: right;
  color: #201838;
}
.bar > .spin {
  width: 26px;
  height: 36px;
  margin: 0 10px 0 2px;
  display: grid;
  grid-template-rows: 18px 18px;
}
.spin svg {
  width: 26px;
  height: 18px;
  padding: 2px 5px;
  border: 2px solid #fff;
  border-right-color: #696969;
  border-bottom-color: #696969;
}
.bar > .label { width: 84px; margin: 2px 0 0 11px; color: #747a90; line-height: 28px; letter-spacing: -.1px; }
.bar > .field {
  width: 232px;
  height: 38px;
  margin: 0 4px 0 1px;
  border: 2px solid #fff;
  border-top-color: #a0a0a0;
  border-left-color: #a0a0a0;
}
.bar > .combo {
  width: 34px;
  height: 34px;
  margin: 0;
  padding: 12px 0 0 6px;
  border: 2px solid #fff;
  border-right-color: #696969;
  border-bottom-color: #696969;
}
.combo svg { width: 22px; height: 12px; }
.bar > .s1 { margin: 0 0 0 10px; }
.bar > .s2 { margin: 0 0 0 8px; }
.bar > .s3 { margin: 0 0 0 18px; }

.wave {
  height: 299px;
  flex: none;
  display: flex;
  padding: 6px 0 0 1px;
  background: #fff linear-gradient(#fff 2px, #f0f0f0 2px 4px, #a0a0a0 4px 6px) 0 0 / 100% 6px no-repeat;
}
.pane { display: flex; flex-direction: column; flex: none; background: #808080; color: #fff; }
.head { height: 36px; flex: none; display: flex; }
.rule { height: 6px; flex: none; background: linear-gradient(#a0a0a0 2px, #f0f0f0 2px 4px, #fff 4px); }
.body { height: 251px; flex: none; }
.split { width: 6px; background: linear-gradient(90deg, #a0a0a0 2px, #f0f0f0 2px 4px, #fff 4px); }
.names { width: 538px; border-left: 2px solid #a0a0a0; }
.names .head { padding: 4px 0 0 20px; }
.shapes { width: 32px; height: 32px; }
.names .dd { margin: 2px 0 0 6px; }
.tree { border-left: 16px solid #fff; }
.sig { display: flex; height: 30px; }
.sig.first { padding-left: 10px; margin-top: 64px; }
.sig.second { padding-left: 40px; margin-top: 60px; }
.plus { width: 22px; height: 22px; margin-top: 6px; }
.twig { width: 10px; height: 2px; margin: 16px -2px 0 0; background: #dcdce4; }
.gem { width: 30px; height: 30px; margin-right: 10px; }
.sig span { line-height: 28px; letter-spacing: -.2px; }
.insert { width: 508px; height: 14px; margin: -4px 0 0 4px; }
.values { width: 200px; }
.values .head { justify-content: flex-end; padding: 7px 10px 0 0; line-height: 28px; letter-spacing: -.2px; }
.val { height: 30px; padding-left: 4px; line-height: 28px; letter-spacing: -.6px; }
.val.first { margin-top: 64px; }
.val.second { margin-top: 60px; }
.values .line { width: 188px; height: 2px; margin: 2px 0 0 4px; background: #000; }
.plot { width: 1709px; background: #000; }
.plot .mark { width: 6px; height: 34px; margin: 2px 0 0 1690px; background: #ffd400; }
.canvas { width: 1709px; }
```
FILE: wave.js
```js
const COL = 2, MID = 146, AMP = 38;
const GRID = [851, 945, 1039, 1135, 1229, 1323, 1419, 1513, 1607, 1701, 1797, 1891, 1985, 2081, 2175, 2269, 2365, 2459];
document.getElementById('grid').setAttribute('d', GRID.map(x => `M${x + 1} 215v251`).join(''));

// Samples per cycle of the FSK carrier at screen position x.
function samplesPerCycle(x) {
  if (x < 921) return 6.11;
  if (x < 963) return 2.66;
  if (x < 1003) return 3.35;
  if (x < 1067) return 2.66;
  if (x < 1090) return 4;
  if (x < 1933) return 6.09;
  if (x < 1995) return 3.35;
  if (x < 2056) return 2.66;
  if (x < 2106) return 3.25;
  if (x < 2390) return 3.35;
  return 2.66;
}

const SAMPLES_PER_COL = 1.874;

// Each sample is joined to the one before it. A column is lit over the whole
// range of the segments that end in it, less the half that falls in its
// left neighbour when the carrier is slow enough to resolve.
function trace(from, to) {
  const cells = new Map();
  const fill = (c, y1, y2) => {
    if (!cells.has(c)) cells.set(c, new Set());
    for (let y = Math.min(y1, y2); y <= Math.max(y1, y2); y++) cells.get(c).add(y);
  };
  const cols = Math.ceil((to - from) / COL);
  let phase = 0, pc = 0, py = MID;
  for (let k = 1; ; k++) {
    const c = Math.floor(k / SAMPLES_PER_COL);
    if (c >= cols) break;
    const rate = samplesPerCycle(from + c * COL);
    phase += Math.PI * 2 / rate;
    const y = Math.round(MID - AMP * Math.sin(phase));
    if (c === pc || rate < 3) {
      fill(c, py, y);
    } else {
      const m = (py + y) / 2, dir = Math.sign(y - py);
      fill(pc, py, dir >= 0 ? Math.floor(m) : Math.ceil(m));
      fill(c, dir >= 0 ? Math.floor(m) + 1 : Math.ceil(m) - 1, y);
    }
    pc = c;
    py = y;
  }
  const out = ['', ''];
  for (const [c, set] of cells) {
    const x = from + c * COL, ys = [...set].sort((p, q) => p - q);
    for (let i = 0; i < ys.length;) {
      let j = i;
      while (j + 1 < ys.length && ys[j + 1] === ys[j] + 1) j++;
      out[x >= 2441 && x < 2447 ? 1 : 0] += `M${x} ${ys[i] * 2 + 1}h2v${(j - i + 1) * 2}h-2z`;
      i = j + 1;
    }
  }
  return out;
}

const a = trace(757, 2105);
const b = trace(2359, 2460);
document.getElementById('bus').setAttribute('d', a[0] + b[0]);
document.getElementById('busCursor').setAttribute('d', b[1]);
```
